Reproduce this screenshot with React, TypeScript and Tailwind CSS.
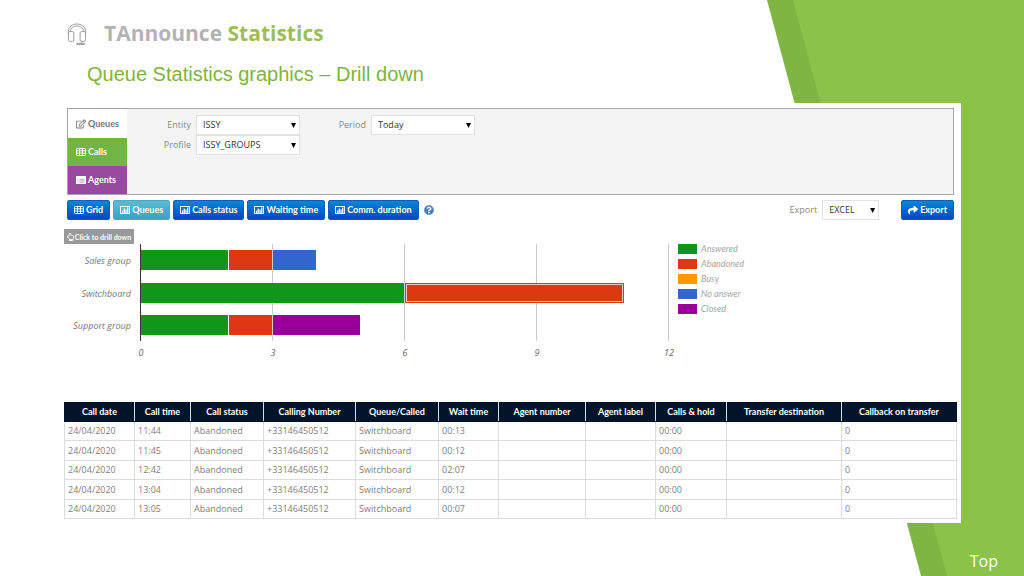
import React from "react";
import { FaRegEdit, FaShare, FaQuestionCircle, FaRegHandPointUp } from "react-icons/fa";

const GridIcon = () => (
  <svg viewBox="0 0 20 16" className="h-2 w-2.5 shrink-0" aria-hidden="true">
    <rect x="1" y="1" width="18" height="14" rx="1.5" fill="none" stroke="currentColor" strokeWidth="2" />
    <path d="M1 5.5h18M1 10.2h18M7 2v13M13 2v13" stroke="currentColor" strokeWidth="1.8" fill="none" />
  </svg>
);

const ListIcon = () => (
  <svg viewBox="0 0 20 16" className="h-2 w-2.5 shrink-0" aria-hidden="true">
    <rect x="0" y="0" width="20" height="16" rx="1.5" fill="currentColor" />
    <path d="M3 6.5h2M7 6.5h10M3 9.5h2M7 9.5h10M3 12.5h2M7 12.5h10" stroke="#984b9e" strokeWidth="1" />
  </svg>
);

const ChartIcon = () => (
  <svg viewBox="0 0 20 16" className="h-2 w-2.5 shrink-0" aria-hidden="true">
    <rect x="1" y="1" width="18" height="14" fill="none" stroke="currentColor" strokeWidth="1.8" />
    <path d="M5 14V9M8.5 14V5M12 14V7M15.5 14V3" stroke="currentColor" strokeWidth="2.6" />
  </svg>
);

const Headset = () => (
  <svg viewBox="0 0 20 22" className="h-[22px] w-5 shrink-0 text-[#858585]" fill="none" stroke="currentColor" strokeWidth="0.8" aria-hidden="true">
    <path d="M1.400 11V8.500C1.400 4 5 1 10 1s8.600 3 8.600 7.500V16c0 1.500-.6 2.300-2 2.300h-1.800" />
    <path d="M3.400 8.500C3.600 5 6.400 3 10 3s6.400 2 6.600 5.500" />
    <path d="M1.400 10v6.500c0 1.300.7 1.900 1.800 1.900h2.200c.9 0 1.400-.5 1.400-1.400v-7c0-.9-.5-1.400-1.400-1.400H3.200c-1.100 0-1.800.5-1.800 1.400z" />
    <path d="M18.600 10c0-.9-.6-1.400-1.600-1.400h-2.400c-.9 0-1.500.5-1.500 1.400v7.200c0 .7.500 1.100 1.200 1.100h.5v2M10 20.300h7.300c.8 0 1 1.200 0 1.200h-7c-.9 0-.9-1.200-.3-1.200z" />
  </svg>
);

type PickProps = { id: string; label: string; options: string[]; width: string; labelWidth: string };

const Pick = ({ id, label, options, width, labelWidth }: PickProps) => (
  <div className="flex items-center gap-[5px]">
    <label htmlFor={id} className={`text-right text-[#8a8a8a] ${labelWidth}`}>{label}</label>
    <div className={`relative ${width}`}>
      <select id={id} className="block h-5 w-full appearance-none border border-[#e2e2e2] bg-white pl-1.5 text-[9px] text-[#333]">
        {options.map((o) => <option key={o}>{o}</option>)}
      </select>
      <span className="pointer-events-none absolute top-2 right-1 h-[5px] w-[5px] bg-black [clip-path:polygon(0_0,100%_0,50%_100%)]" />
    </div>
  </div>
);

const blue = "border-[#0a5cc0] bg-linear-to-b from-[#0a86d4] to-[#0a45c8]";
const teal = "border-[#4aa9c6] bg-linear-to-b from-[#58bcd2] to-[#3aa2c2]";

const ToolButton = ({ icon, children, active }: { icon: React.ReactNode; children: React.ReactNode; active?: boolean }) => (
  <button type="button" className={`flex h-5 items-center gap-0.5 rounded-[2px] border px-1.5 font-[Lato,sans-serif] text-[9px] font-bold whitespace-nowrap text-white ${active ? teal : blue}`}>
    {icon}
    {children}
  </button>
);

const X0 = 77;
const UNIT = 44;
const groups = [
  { name: "Sales group", y: 10, parts: [[0, 2, "#109618"], [2, 1, "#dc3912"], [3, 1, "#3366cc"]] },
  { name: "Switchboard", y: 43, parts: [[0, 6, "#109618"], [6, 5, "#dc3912"]] },
  { name: "Support group", y: 75, parts: [[0, 2, "#109618"], [2, 1, "#dc3912"], [3, 2, "#990099"]] },
] as { name: string; y: number; parts: [number, number, string][] }[];

const Chart = () => (
  <svg viewBox="0 0 614 122" className="h-[122px] w-[614px] shrink-0 font-['Open_Sans',sans-serif] text-[9px] italic" role="img" aria-label="Calls by queue">
    {[3, 6, 9, 12].map((v) => <rect key={v} x={X0 + v * UNIT - 1} y="4" width="1" height="97" fill="#ccc" />)}
    {groups.map((g) => (
      <g key={g.name}>
        <text x="67" y={g.y + 14} textAnchor="end" fill="#777">{g.name}</text>
        {g.parts.map(([s, n, c]) => (
          <rect key={s} x={X0 + s * UNIT} y={g.y} width={n * UNIT - 1} height="20" fill={c} />
        ))}
      </g>
    ))}
    <rect x="341" y="43" width="1" height="20" fill="#dc3912" />
    <rect x="342.500" y="44.500" width="216" height="17" fill="none" stroke="#fff" strokeOpacity="0.7" />
    <rect x="76" y="4" width="1" height="97" fill="#333" />
    {[0, 3, 6, 9, 12].map((v) => <text key={v} x={X0 + v * UNIT} y="116" textAnchor="middle" fill="#666">{v}</text>)}
  </svg>
);

const legend = [
  ["Answered", "bg-[#109618]"],
  ["Abandoned", "bg-[#dc3912]"],
  ["Busy", "bg-[#ff9900]"],
  ["No answer", "bg-[#3366cc]"],
  ["Closed", "bg-[#990099]"],
];

const columns: [string, number][] = [
  ["Call date", 70], ["Call time", 56], ["Call status", 73], ["Calling Number", 92], ["Queue/Called", 83], ["Wait time", 60],
  ["Agent number", 87], ["Agent label", 70], ["Calls & hold", 71], ["Transfer destination", 115], ["Callback on transfer", 115],
];
const calls = [["11:44", "00:13"], ["11:45", "00:12"], ["12:42", "02:07"], ["13:04", "00:12"], ["13:05", "00:07"]];

export default function App() {
  return (
    <div className="relative flex min-h-screen flex-col overflow-hidden bg-white font-['Open_Sans',sans-serif]">
      <svg viewBox="0 0 257 576" preserveAspectRatio="none" className="absolute top-0 right-0 h-full w-[257px]" aria-hidden="true">
        <path d="M0 0H257V576H154Z" fill="#7fb542" />
        <path d="M26 0H257V576H180Z" fill="#8bc34a" />
      </svg>

      <header className="relative pt-5 pl-[67px]">
        <h1 className="flex h-7 items-center gap-[17px] text-[21px] font-bold text-[#b3b3b3]">
          <Headset />
          <span>TAnnounce <span className="text-[#9bbf56]">Statistics</span></span>
        </h1>
        <h2 className="mt-3 pl-5 font-['Liberation_Sans',sans-serif] text-[20px] leading-7 text-[#7db53c]">Queue Statistics graphics – Drill down</h2>
      </header>

      <main className="relative mt-[15px] mr-[63px] ml-16 bg-white pt-[5px] pr-1 pb-1 text-[9px] leading-3">
        <section className="mr-[3px] ml-[3px] flex border border-[#a5a5a5] bg-[#f4f4f4]">
          <nav className="flex w-[59px] flex-col font-[Lato,sans-serif] text-[9px] font-bold">
            <a href="#queues" className="flex h-[29px] items-center gap-0.5 bg-white pl-2 text-[#777]"><FaRegEdit className="size-[10px]" />Queues</a>
            <a href="#calls" className="flex h-7 items-center gap-0.5 bg-[#6fb644] pl-2 text-white"><GridIcon />Calls</a>
            <a href="#agents" className="flex h-7 items-center gap-0.5 bg-[#984b9e] pl-2 text-white"><ListIcon />Agents</a>
          </nav>
          <form className="flex items-start gap-9 pt-1.5">
            <div className="flex flex-col">
              <Pick id="entity" label="Entity" options={["ISSY"]} width="w-[104px]" labelWidth="w-16" />
              <Pick id="profile" label="Profile" options={["ISSY_GROUPS"]} width="w-[104px]" labelWidth="w-16" />
            </div>
            <Pick id="period" label="Period" options={["Today"]} width="w-[104px]" labelWidth="w-[30px]" />
          </form>
        </section>

        <div className="mt-[5px] mr-[3px] ml-[3px] flex items-center gap-[3px]">
          <ToolButton icon={<GridIcon />}>Grid</ToolButton>
          <ToolButton icon={<ChartIcon />} active>Queues</ToolButton>
          <ToolButton icon={<ChartIcon />}>Calls status</ToolButton>
          <ToolButton icon={<ChartIcon />}>Waiting time</ToolButton>
          <ToolButton icon={<ChartIcon />}>Comm. duration</ToolButton>
          <FaQuestionCircle className="ml-0.5 size-[10px] text-[#4a7fc0]" />
          <div className="ml-auto flex items-center gap-[22px]">
            <Pick id="format" label="Export" options={["EXCEL"]} width="w-[57px]" labelWidth="w-auto" />
            <ToolButton icon={<FaShare className="size-[10px]" />}>Export</ToolButton>
          </div>
        </div>

        <section className="relative mt-5 flex">
          <div className="absolute -top-[11px] left-0 flex h-[15px] w-[70px] items-center justify-center gap-px bg-[#999] font-[Lato,sans-serif] text-[7px] font-bold whitespace-nowrap text-white">
            <FaRegHandPointUp className="h-2 w-[7px] shrink-0" />
            Click to drill down
          </div>
          <Chart />
          <ul className="pt-px font-[Lato,sans-serif] text-[#a5a5a5] italic">
            {legend.map(([name, color]) => (
              <li key={name} className="flex h-[15px] items-center gap-1">
                <span className={`h-[10px] w-[19px] ${color}`} />
                <span>{name}</span>
              </li>
            ))}
          </ul>
        </section>

        <table className="mt-10 w-full table-fixed border-collapse text-[#808080]">
          <colgroup>{columns.map(([c, w]) => <col key={c} style={{ width: w }} />)}</colgroup>
          <thead>
            <tr className="h-[19px] bg-[#02142a] font-[Lato,sans-serif] text-[9px] text-white">
              {columns.map(([c]) => <th key={c} scope="col" className="border border-[#dcdcdc] border-y-[#02142a] p-0 font-bold whitespace-nowrap first:border-l-[#02142a] last:border-r-[#02142a]">{c}</th>)}
            </tr>
          </thead>
          <tbody>
            {calls.map(([time, wait]) => (
              <tr key={time} className="odd:h-[19px] even:h-5">
                {["24/04/2020", time, "Abandoned", "+33146450512", "Switchboard", wait, "", "", "00:00", "", "0"].map((v, i) => (
                  <td key={columns[i][0]} className="border border-[#dcdcdc] py-0 pr-0 pl-[3px] whitespace-nowrap">{v}</td>
                ))}
              </tr>
            ))}
          </tbody>
        </table>
      </main>

      <a href="#top" className="absolute right-[26px] bottom-1 text-[16px] leading-[22px] text-white">Top</a>
    </div>
  );
}
